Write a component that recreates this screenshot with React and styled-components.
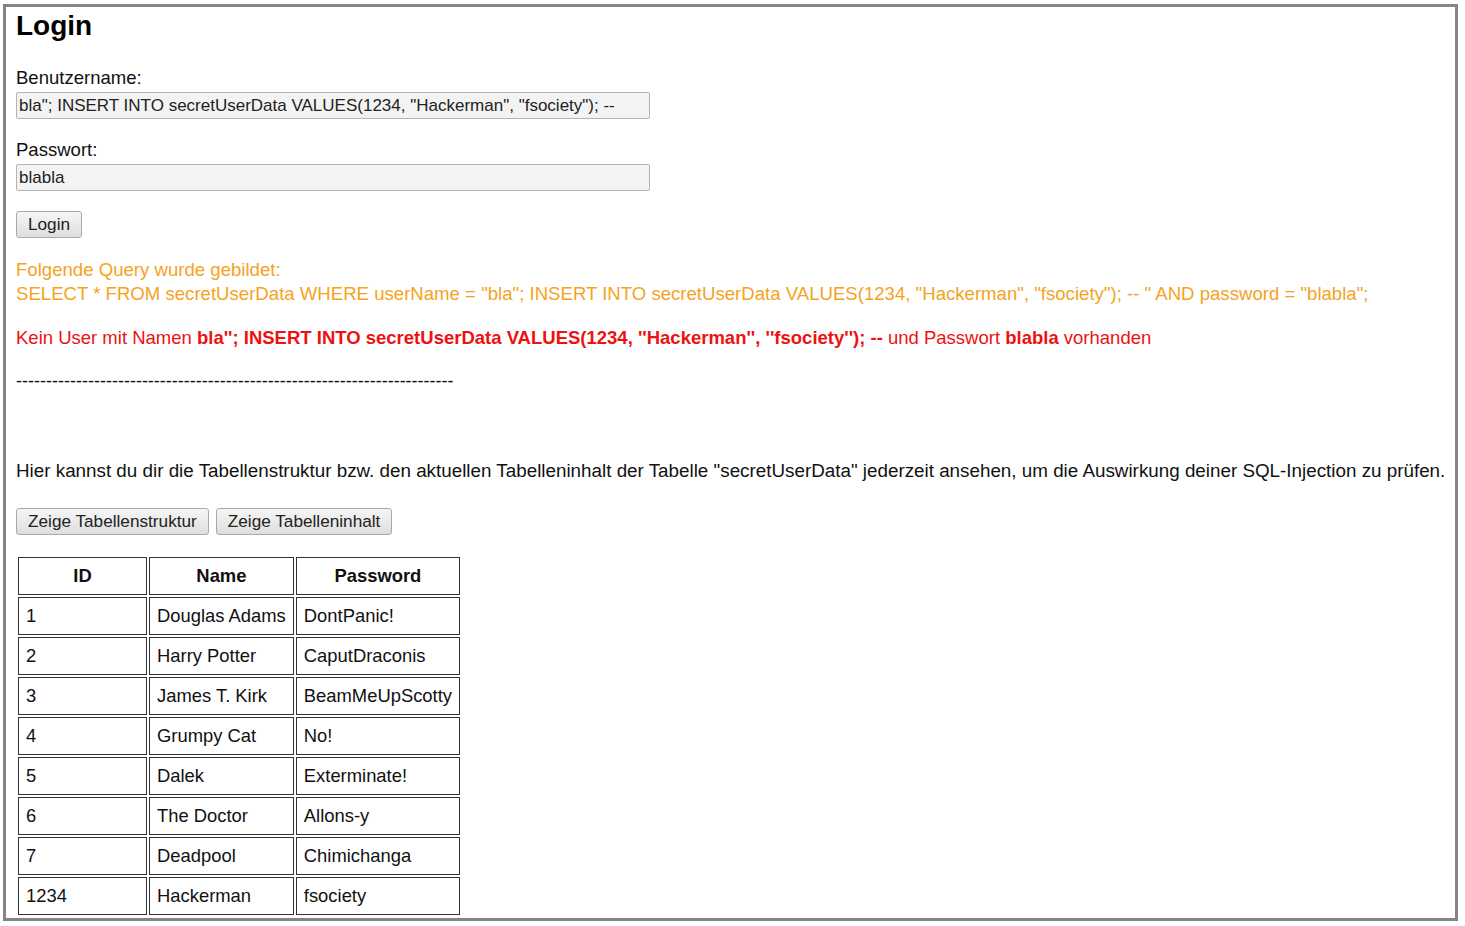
import React from 'react';
import styled, { createGlobalStyle } from 'styled-components';

const GlobalStyle = createGlobalStyle`
  html, body {
    margin: 0;
    padding: 0;
    background: #fff;
  }
  body {
    font-family: "Liberation Sans", Arial, sans-serif;
    color: #111;
  }
`;

const Frame = styled.div`
  box-sizing: border-box;
  width: 1455px;
  height: 917px;
  margin: 4px 0 0 3px;
  border: 3px solid #858585;
  padding: 3px 10px 0 10px;
  overflow: hidden;
`;

const Heading = styled.h1`
  margin: 0 0 24px 0;
  font-size: 28px;
  line-height: 32px;
  font-weight: bold;
  color: #000;
`;

const Label = styled.div`
  font-size: 18.55px;
  line-height: 24px;
  margin-top: ${({ $top }) => $top || 0}px;
`;

const TextInput = styled.input`
  box-sizing: border-box;
  display: block;
  width: 634px;
  height: 27px;
  margin-top: 2px;
  padding: 0 2px;
  border: 1px solid #b4b4b4;
  border-radius: 2px;
  background: #f3f3f3;
  font-family: "Liberation Sans", Arial, sans-serif;
  font-size: 17px;
  color: #222;
  outline: none;
`;

const Button = styled.button`
  box-sizing: border-box;
  height: 27px;
  padding: 0 11px;
  border: 1px solid #a9a9a9;
  border-radius: 3px;
  background: linear-gradient(#f6f6f6, #dedede);
  font-family: "Liberation Sans", Arial, sans-serif;
  font-size: 17.2px;
  color: #222;
`;

const LoginRow = styled.div`
  margin-top: 20px;
`;

const QueryInfo = styled.div`
  margin-top: 20px;
  font-size: 18.6px;
  line-height: 24px;
  color: #f5a31e;
`;

const ErrorLine = styled.div`
  margin-top: 20px;
  font-size: 18.5px;
  line-height: 24px;
  color: #ee1111;

  b {
    font-weight: bold;
  }
`;

const Divider = styled.div`
  margin-top: 19px;
  font-size: 18px;
  line-height: 24px;
  color: #111;
`;

const Hint = styled.p`
  margin: 66px 0 0 0;
  font-size: 18.82px;
  line-height: 24px;
  color: #111;
  white-space: nowrap;
`;

const ButtonRow = styled.div`
  display: flex;
  gap: 7px;
  margin-top: 25px;
`;

const Table = styled.table`
  margin-top: 20px;
  border-collapse: separate;
  border-spacing: 2px;
  font-size: 18.4px;
  color: #111;
`;

const HeadCell = styled.th`
  border: 1px solid #333;
  padding: 7px 7px;
  line-height: 22px;
  font-weight: bold;
  text-align: center;
  width: ${({ $w }) => ($w ? `${$w}px` : 'auto')};
`;

const Cell = styled.td`
  border: 1px solid #333;
  padding: 7px 7px;
  line-height: 22px;
  text-align: left;
  white-space: nowrap;
`;

const rows = [
  ['1', 'Douglas Adams', 'DontPanic!'],
  ['2', 'Harry Potter', 'CaputDraconis'],
  ['3', 'James T. Kirk', 'BeamMeUpScotty'],
  ['4', 'Grumpy Cat', 'No!'],
  ['5', 'Dalek', 'Exterminate!'],
  ['6', 'The Doctor', 'Allons-y'],
  ['7', 'Deadpool', 'Chimichanga'],
  ['1234', 'Hackerman', 'fsociety'],
];

const injection = 'bla"; INSERT INTO secretUserData VALUES(1234, "Hackerman", "fsociety"); --';

export default function App() {
  return (
    <>
      <GlobalStyle />
      <Frame>
        <Heading>Login</Heading>

        <Label>Benutzername:</Label>
        <TextInput type="text" defaultValue={injection} />

        <Label $top={19}>Passwort:</Label>
        <TextInput type="text" defaultValue="blabla" />

        <LoginRow>
          <Button type="button">Login</Button>
        </LoginRow>

        <QueryInfo>
          Folgende Query wurde gebildet:
          <br />
          SELECT * FROM secretUserData WHERE userName = "bla"; INSERT INTO secretUserData VALUES(1234, "Hackerman", "fsociety"); -- " AND password = "blabla";
        </QueryInfo>

        <ErrorLine>
          Kein User mit Namen <b>bla''; INSERT INTO secretUserData VALUES(1234, ''Hackerman'', ''fsociety''); --</b> und Passwort <b>blabla</b> vorhanden
        </ErrorLine>

        <Divider>{'-'.repeat(73)}</Divider>

        <Hint>
          Hier kannst du dir die Tabellenstruktur bzw. den aktuellen Tabelleninhalt der Tabelle "secretUserData" jederzeit ansehen, um die Auswirkung deiner SQL-Injection zu prüfen.
        </Hint>

        <ButtonRow>
          <Button type="button">Zeige Tabellenstruktur</Button>
          <Button type="button">Zeige Tabelleninhalt</Button>
        </ButtonRow>

        <Table>
          <thead>
            <tr>
              <HeadCell $w={113}>ID</HeadCell>
              <HeadCell>Name</HeadCell>
              <HeadCell>Password</HeadCell>
            </tr>
          </thead>
          <tbody>
            {rows.map(([id, name, pw]) => (
              <tr key={id}>
                <Cell>{id}</Cell>
                <Cell>{name}</Cell>
                <Cell>{pw}</Cell>
              </tr>
            ))}
          </tbody>
        </Table>
      </Frame>
    </>
  );
}
